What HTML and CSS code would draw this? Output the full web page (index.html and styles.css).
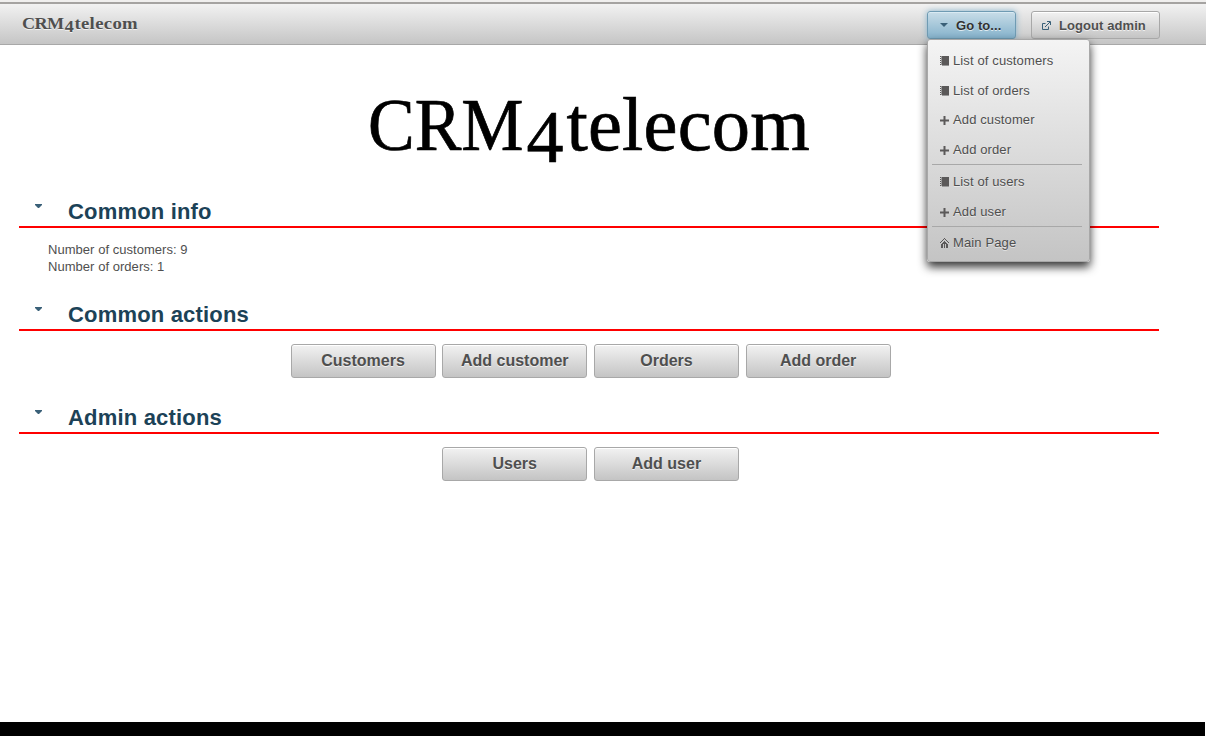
FILE: index.html
```html
<!DOCTYPE html>
<html lang="en">
<head>
<meta charset="utf-8">
<title>CRM4telecom</title>
<link rel="stylesheet" href="styles.css">
</head>
<body>
<svg class="defs" aria-hidden="true">
  <symbol id="book" viewBox="0 0 9 10"><path d="M2 0h7v9H2zM0 0h1v1H0zM0 2h1v1H0zM0 4h1v1H0zM0 6h1v1H0zM0 8h1v1H0z" fill="#5b5959"/><path d="M1 0h1v9H1zM2 9h7v1H2z" fill="#999"/></symbol>
  <symbol id="plus" viewBox="0 0 9 10"><path d="M3.5 1h2v3.5H9v2H5.5V10h-2V6.500H0v-2h3.500z" fill="#5b5959"/></symbol>
  <symbol id="home" viewBox="0 0 9 10"><path d="M4 0h1v1h1v1h1v1h1v1h1v1H8V4H7V3H6V2H5V1H4v1H3v1H2v1H1v1H0V4h1V3h1V2h1V1h1zM4 3h1v1h1v1h1v1h1v4H6V6H5v4H4V6H3v4H1V6h1V5h1V4h1z" fill="#5b5959"/></symbol>
</svg>
<header class="bar">
  <div class="brand">CRM<span class="oldstyle">4</span><span class="rest">telecom</span></div>
  <nav class="tools">
    <div class="menu-wrap">
      <button class="btn tool active"><svg class="arrow" viewBox="0 0 8 4" width="8" height="4"><path d="M0 0h8L4 4z"/></svg>Go to...</button>
      <div class="menu">
        <a class="item"><svg><use href="#book"/></svg>List of customers</a>
        <a class="item"><svg><use href="#book"/></svg>List of orders</a>
        <a class="item"><svg><use href="#plus"/></svg>Add customer</a>
        <a class="item"><svg><use href="#plus"/></svg>Add order</a>
        <div class="rule"></div>
        <a class="item"><svg><use href="#book"/></svg>List of users</a>
        <a class="item"><svg><use href="#plus"/></svg>Add user</a>
        <div class="rule"></div>
        <a class="item last"><svg><use href="#home"/></svg>Main Page</a>
      </div>
    </div>
    <button class="btn tool logout"><svg viewBox="0 0 9 9" width="9" height="9"><path d="M3.500 2.500h-3v6h6v-3M3 6l5-5M5 .5h3.500V4" fill="none" stroke="#3a6078"/></svg>Logout admin</button>
  </nav>
</header>
<main class="page">
  <h1 class="title"><span class="caps">CRM</span><span class="oldstyle">4</span><span class="rest">telecom</span></h1>
  <section class="panel">
    <h2 class="heading"><svg class="arrow" viewBox="0 0 7 4" width="7" height="4"><path d="M0 0h7v1L4 4H3L0 1z"/></svg>Common info</h2>
    <div class="info">Number of customers: 9<br>Number of orders: 1</div>
  </section>
  <section class="panel">
    <h2 class="heading"><svg class="arrow" viewBox="0 0 7 4" width="7" height="4"><path d="M0 0h7v1L4 4H3L0 1z"/></svg>Common actions</h2>
    <div class="actions"><button class="btn">Customers</button><button class="btn">Add customer</button><button class="btn">Orders</button><button class="btn">Add order</button></div>
  </section>
  <section class="panel">
    <h2 class="heading"><svg class="arrow" viewBox="0 0 7 4" width="7" height="4"><path d="M0 0h7v1L4 4H3L0 1z"/></svg>Admin actions</h2>
    <div class="actions"><button class="btn">Users</button><button class="btn">Add user</button></div>
  </section>
</main>
<footer class="foot"></footer>
</body>
</html>
```
FILE: styles.css
```css
* { box-sizing: border-box; }
body {
  margin: 0;
  height: 736px;
  display: flex;
  flex-direction: column;
  overflow: hidden;
  background: #fff;
  color: #4f4f4f;
  font: 13px/17px "Liberation Sans", Arial, sans-serif;
}
svg { flex: none; }
.defs { position: absolute; width: 0; height: 0; }
.arrow { fill: #3a6078; }

.bar {
  flex: none;
  display: flex;
  justify-content: space-between;
  height: 45px;
  border-top: 2px solid #f0efee;
  padding: 9px 46px 0 22px;
  background:
    linear-gradient(#a5a3a1, #a5a3a1) top / 100% 2px no-repeat,
    linear-gradient(#a8a8a8, #a8a8a8) bottom / 100% 1px no-repeat,
    linear-gradient(#f4f4f4, #c4c4c4);
}
.brand {
  display: flex;
  height: 26px;
  font: bold 16.5px/26px "Liberation Serif", serif;
  letter-spacing: -.5px;
  text-shadow: 0 1px 0 rgba(255, 255, 255, .7);
  transform: scaleX(1.1);
  transform-origin: left;
}
.brand .oldstyle { margin: 0 1px; transform: translateY(3px); }
.brand .rest { font-size: 17px; letter-spacing: .3px; }
.tools { display: flex; gap: 15px; }

.btn {
  width: 145px;
  height: 34px;
  padding: 0 0 1px;
  border: 1px solid #a8a8a8;
  border-radius: 3px;
  background: linear-gradient(#f2f2f2, #c4c4c4);
  box-shadow: inset 0 1px 0 #fff;
  color: #4f4f4f;
  font: bold 16px/20px "Liberation Sans", Arial, sans-serif;
  text-shadow: 0 1px 0 rgba(255, 255, 255, .7);
}
.tool {
  display: flex;
  align-items: center;
  height: 28px;
  padding: 1px 0 0;
  font-size: 13px;
  letter-spacing: .08px;
}
.active {
  width: 89px;
  padding-left: 12px;
  gap: 8px;
  border-color: #6f9bb3;
  background: linear-gradient(#c8dde8, #85b2cb);
  box-shadow: 0 0 6px #85b2cb, inset 0 1px 0 #d9eaf3;
  color: #313131;
}
.logout { width: 129px; padding-left: 10px; gap: 8px; }
.tool svg { margin-top: -1px; }

.menu-wrap { position: relative; height: 28px; }
.menu {
  position: absolute;
  z-index: 2;
  top: 28px;
  left: 0;
  width: 163px;
  height: 223px;
  padding: 6px 7px 0 4px;
  border: 1px solid #a8a8a8;
  border-radius: 3px;
  background: linear-gradient(#f4f4f4, #c4c4c4);
  box-shadow: 0 5px 10px rgba(0, 0, 0, .8);
}
.item {
  display: flex;
  align-items: center;
  gap: 4px;
  height: 29.6px;
  padding-left: 8px;
  letter-spacing: .12px;
  text-shadow: 0 1px 0 rgba(255, 255, 255, .5);
}
.item svg { width: 9px; height: 10px; margin-top: 1px; }
.item.last { height: 28px; }
.rule { height: 1px; margin: -.5px 0 2px; background: #a8a8a8; }

.page { flex: 1; width: 1159px; padding: 35px 0 0 19px; }
.title {
  display: flex;
  justify-content: center;
  height: 90px;
  margin: 0;
  color: #000;
  font: 74px/90px "Liberation Serif", serif;
  -webkit-text-stroke: .7px #000;
}
.title .caps { margin-right: -9px; transform: scaleX(.945); transform-origin: left; }
.title .oldstyle { margin: 0 3px; transform: translateY(12px); }
.title .rest { font-size: 76.5px; letter-spacing: .2px; }
.panel { height: 103px; }
.title + .panel { margin-top: 28px; }
.heading {
  display: flex;
  align-items: flex-start;
  gap: 26px;
  height: 30px;
  margin: 0;
  padding: 0 0 0 16px;
  border-bottom: 2px solid #f00;
  color: #1c4257;
  font: bold 22px/27px "Liberation Sans", Arial, sans-serif;
  letter-spacing: .18px;
}
.heading .arrow { margin-top: 6px; }
.info { padding: 13px 29px; letter-spacing: .04px; }
.actions { display: flex; justify-content: center; gap: 6.7px; padding-top: 13px; margin-left: 3.2px; }
.foot { flex: none; height: 14px; margin-right: 1px; background: #000; }
```
